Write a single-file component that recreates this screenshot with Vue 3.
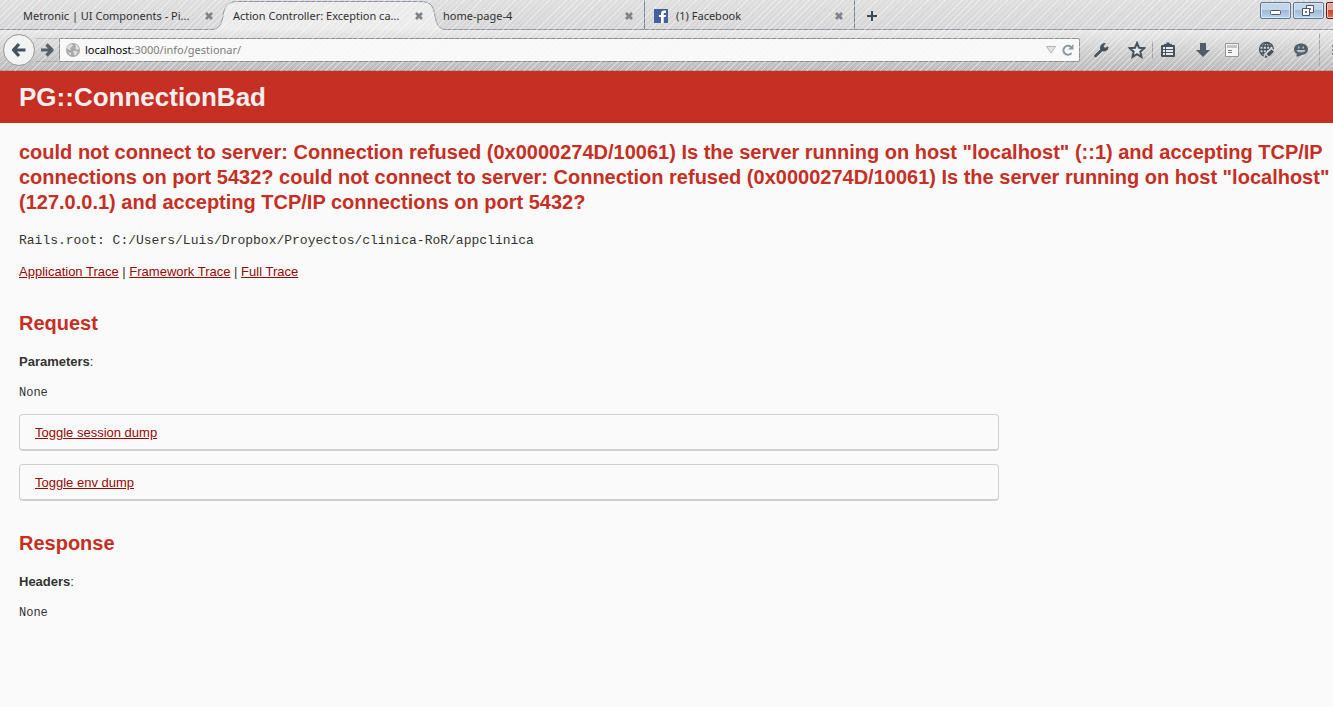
<script setup>
import { ref } from 'vue'

const tabs = [
  { title: 'Metronic | UI Components - Pi...', kind: 'first' },
  { title: 'Action Controller: Exception ca...', kind: 'active' },
  { title: 'home-page-4', kind: 'plain' },
  { title: '(1) Facebook', kind: 'icon' }
]
const url = ref('localhost:3000/info/gestionar/')
</script>

<template>
  <div class="browser">
    <header class="chrome">
      <div class="tabstrip">
        <div v-for="tab in tabs" :key="tab.title" class="tab" :class="tab.kind">
          <template v-if="tab.kind === 'active'">
            <svg class="cap cap-left" width="26" height="30" viewBox="0 0 26 30" aria-hidden="true">
              <path d="M0 30V29.500C7 29.500 9.500 24 11 16C12.500 6 15 1.500 26 1.500V30Z" fill="#ebebeb" />
              <path d="M0 29.500C7 29.500 9.500 24 11 16C12.500 6 15 1.500 26 1.500" fill="none" stroke="#8f969e" />
            </svg>
            <svg class="cap cap-right" width="26" height="30" viewBox="0 0 26 30" aria-hidden="true">
              <path d="M26 30V29.500C19 29.500 16.500 24 15 16C13.500 6 11 1.500 0 1.500V30Z" fill="#ebebeb" />
              <path d="M26 29.500C19 29.500 16.500 24 15 16C13.500 6 11 1.500 0 1.500" fill="none" stroke="#8f969e" />
            </svg>
          </template>
          <svg v-if="tab.kind === 'icon'" class="favicon" width="14" height="14" viewBox="0 0 14 14" aria-hidden="true">
            <path d="M0 0H14V14H0Z" fill="#4560a0" />
            <path d="M7 14V8H5V6H7V4.500C7 2.500 8.200 1.500 10 1.500H12V4H10.500C9.900 4 9.700 4.300 9.700 4.800V6H12L11.700 8H9.700V14Z" fill="#fff" />
          </svg>
          <span class="tab-title">{{ tab.title }}</span>
          <button class="close" :aria-label="'Close ' + tab.title">
            <svg width="8" height="8" viewBox="0 0 8 8"><path d="M1 1L7 7M7 1L1 7" stroke="#7c838a" stroke-width="2.600" /></svg>
          </button>
        </div>
        <button class="new-tab" aria-label="New tab">
          <svg width="10" height="10" viewBox="0 0 10 10"><path d="M5 0V10M0 5H10" stroke="#3c4854" stroke-width="2" /></svg>
        </button>
        <div class="window-buttons">
          <button class="win" aria-label="Minimize">
            <svg width="31" height="17" viewBox="0 0 31 17"><rect x="10.500" y="8.500" width="10" height="4" rx="1" fill="#fff" stroke="#505763" /></svg>
          </button>
          <button class="win" aria-label="Restore">
            <svg width="31" height="17" viewBox="0 0 31 17"><g fill="#f8fafc" stroke="#505763"><path d="M13.500 3.500H20.500V10.500H13.500Z" /><path d="M16.500 6.500H17.500V7.500H16.500Z" fill="#7794b4" /><path d="M9.500 6.500H16.500V13.500H9.500Z" /><path d="M12.500 9.500H13.500V10.500H12.500Z" fill="#7794b4" /></g></svg>
          </button>
          <button class="win win-close" aria-label="Close window"></button>
        </div>
      </div>

      <div class="toolbar">
        <button class="back" aria-label="Back">
          <svg width="16" height="16" viewBox="0 0 16 16"><path d="M8 2L2.500 8L8 14M3 8H14.500" fill="none" stroke="#44515e" stroke-width="3.200" stroke-linejoin="round" /></svg>
        </button>
        <button class="forward" aria-label="Forward">
          <svg width="14" height="14" viewBox="0 0 14 14"><path d="M6.500 1.500L12 7L6.500 12.500M11 7H1" fill="none" stroke="#56616c" stroke-width="3.200" stroke-linejoin="round" /></svg>
        </button>
        <div class="location">
          <svg width="14" height="14" viewBox="0 0 14 14" aria-hidden="true">
            <circle cx="7" cy="7" r="7" fill="#a9a9a9" />
            <path d="M1 5L2 3L5 1L7 2L6 4L4 5L5 7L3 7ZM9 1L12 3L13 6L11 7L9 5L10 4ZM7 8L10 8L12 9L9 13L8 11ZM2 9L5 10L5 12L4 12Z" fill="#e0e0e0" />
          </svg>
          <label class="address">
            <span class="shown" aria-hidden="true"><b>localhost</b>:3000/info/gestionar/</span>
            <input v-model="url" type="text" aria-label="Address" />
          </label>
          <button class="mini" aria-label="History">
            <svg width="10" height="8" viewBox="0 0 10 8"><path d="M0.500 0.500H9.500L5 7Z" fill="#dfe3ea" stroke="#adb3bf" /></svg>
          </button>
          <button class="mini reload" aria-label="Reload">
            <svg width="12" height="12" viewBox="0 0 12 12"><path d="M9.500 9A4.500 4.500 0 1 1 9 3" fill="none" stroke="#8c98a6" stroke-width="2" /><path d="M11.500 0V5.500H6Z" fill="#8c98a6" /></svg>
          </button>
        </div>
        <nav class="tools" aria-label="Toolbar">
          <button class="tool" aria-label="Developer tools">
            <svg width="16" height="16" viewBox="0 0 16 16"><path d="M1.200 13.200L7.200 7.400C6.700 4.500 7.800 1.500 12 1L12.800 1.400L10.500 4L12 6L15 4.200L15.400 5C15.400 8.400 12.400 9.800 9.300 9.300L3.400 15C2 15.600 0.700 14.600 1.200 13.200Z" fill="#46535f" /></svg>
          </button>
          <button class="tool star" aria-label="Bookmark this page">
            <svg width="18" height="18" viewBox="0 0 18 18"><path d="M9 2L11 6.800L16.300 7.200L12.300 10.700L13.500 15.900L9 13.100L4.500 15.900L5.700 10.700L1.700 7.200L7 6.800Z" fill="#e8e8e8" stroke="#46535f" stroke-width="2" /></svg>
          </button>
          <button class="tool clip" aria-label="Bookmarks">
            <svg width="16" height="16" viewBox="0 0 16 16"><path d="M1 4Q1 3 2 3H4V2H6.500V0.500H9.500V2H12V3H14Q15 3 15 4V14Q15 15 14 15H2Q1 15 1 14Z" fill="#46535f" /><path d="M3 5H5V7H3ZM6 5H13V7H6ZM3 8H5V10H3ZM6 8H13V10H6ZM3 11H5V13H3ZM6 11H13V13H6Z" fill="#e8e8e8" /></svg>
          </button>
          <button class="tool" aria-label="Downloads">
            <svg width="16" height="16" viewBox="0 0 16 16"><path d="M5 1H11V8H15L8 15L1 8H5Z" fill="#4f5d6a" /></svg>
          </button>
          <button class="tool page" aria-label="Panel">
            <svg width="14" height="14" viewBox="0 0 14 14"><path d="M0.500 0.500H13.500V13.500H0.500Z" fill="#f6f6f6" stroke="#969696" /><path d="M2 2H12V5H2Z" fill="#c4c4c4" /><path d="M3 7.500H7M3 9.500H7" stroke="#777" /></svg>
          </button>
          <button class="tool globe" aria-label="Web tools">
            <svg width="18" height="18" viewBox="0 0 18 18"><g fill="none" stroke="#46535f" stroke-width="1.300"><circle cx="8.500" cy="8.500" r="7" /><ellipse cx="8.500" cy="8.500" rx="3.500" ry="7" /><path d="M8.500 1V16M1.500 8.500H16M2.500 5H14.500M2.500 12H14.500" /></g><path d="M5 17.500L6.500 12.500L13 6.500L17.500 10L11 17Z" fill="#d8d8d8" /><path d="M6.500 17L7.500 14L10 16.200ZM8.500 13L13.500 8.500L16 10.800L11 15.400Z" fill="#46535f" /></svg>
          </button>
          <button class="tool chat" aria-label="Chat">
            <svg width="16" height="16" viewBox="0 0 16 16"><path d="M8 1.500C12.200 1.500 15 3.900 15 7.200C15 10.500 12.200 12.700 8.500 12.900C7 14 5 14.700 2.500 14.300C3.700 13.600 4 12.600 3.800 11.700C2 10.700 1 9.200 1 7.200C1 3.900 3.800 1.500 8 1.500Z" fill="#52606d" /><path d="M5 4.500H6.500V6.500H5ZM9.500 4.500H11V6.500H9.500ZM3.500 8H12.500C12 9.800 10.300 10.500 8 10.500S4 9.800 3.500 8Z" fill="#b9bfc5" /></svg>
          </button>
          <button class="menu" aria-label="Menu">
            <svg width="12" height="12" viewBox="0 0 12 12"><path d="M0 2H12M0 6H12M0 10H12" stroke="#7c858e" stroke-width="2" /></svg>
          </button>
        </nav>
      </div>
    </header>

    <main>
      <header class="banner"><h1>PG::ConnectionBad</h1></header>
      <div class="container">
        <h2 class="message">could not connect to server: Connection refused (0x0000274D/10061) Is the server running on host "localhost" (::1) and accepting TCP/IP connections on port 5432? could not connect to server: Connection refused (0x0000274D/10061) Is the server running on host "localhost" (127.0.0.1) and accepting TCP/IP connections on port 5432?</h2>
        <p><code>Rails.root: C:/Users/Luis/Dropbox/Proyectos/clinica-RoR/appclinica</code></p>
        <p><a href="#">Application Trace</a> | <a href="#">Framework Trace</a> | <a href="#">Full Trace</a></p>
        <h2>Request</h2>
        <p><b>Parameters</b>:</p>
        <pre>None</pre>
        <div class="details"><a href="#">Toggle session dump</a></div>
        <div class="details"><a href="#">Toggle env dump</a></div>
        <h2>Response</h2>
        <p><b>Headers</b>:</p>
        <pre>None</pre>
      </div>
    </main>
  </div>
</template>

<style>
html { background: #fafafa; }
</style>

<style scoped>
.browser { font: 13px/18px "Liberation Sans", Arial, sans-serif; color: #333; overflow: hidden; }
button { border: 0; padding: 0; margin: 0; background: none; display: flex; align-items: center; justify-content: center; flex: none; }
svg { display: block; flex: none; position: relative; z-index: 2; }

.chrome { position: relative; font: 11px/18px "Noto Sans", "Open Sans", sans-serif; }
.chrome::after { content: ""; position: absolute; inset: 0; pointer-events: none; background: repeating-linear-gradient(135deg, rgba(255, 255, 255, 0.38) 0 1px, transparent 1px 4px); }

.tabstrip { display: flex; height: 30px; box-sizing: border-box; border-bottom: 1px solid #9097a0; background: linear-gradient(#dedede, #d6d6d6); }
.tab { position: relative; display: flex; align-items: center; width: 210px; height: 29px; box-sizing: border-box; padding: 2px 10px 0 9px; border-right: 1px solid #7b838c; color: #303030; }
.tab.first { width: 223px; padding-left: 23px; padding-right: 9px; border: 0; }
.tab.active { width: 212px; height: 30px; padding: 2px 11px 1px 10px; border: 0; background: linear-gradient(#8f969e, #8f969e) 15px 1px / 182px 1px no-repeat, linear-gradient(#ebebeb, #ebebeb) 15px 2px / 182px 28px no-repeat; }
.tab.plain { padding-left: 8px; }
.tab-title { position: relative; z-index: 2; flex: 1; min-width: 0; white-space: nowrap; }
.close { width: 10px; height: 12px; }
.favicon { margin-right: 8px; }
.cap { position: absolute; top: 0; z-index: auto; }
.cap-left { left: -11px; }
.cap-right { right: -11px; }
.new-tab { width: 34px; padding-top: 2px; }
.window-buttons { position: relative; z-index: 2; display: flex; gap: 2px; height: 17px; margin: 2px -24px 0 auto; }
.win { width: 31px; height: 17px; box-sizing: border-box; border: 1px solid #5f7796; border-radius: 2px; background: linear-gradient(#c3d5e8 0 48%, #9fb9d5 48%, #bcd4ea); box-shadow: inset 0 0 0 1px #d8e5f2; }
.win-close { border-color: #5a1b1c; background: linear-gradient(#e3a598 0 48%, #c2452d 48%, #d5755a); box-shadow: inset 0 0 0 1px #efc0b5; }

.toolbar { display: flex; align-items: center; height: 41px; box-sizing: border-box; padding: 0 0 1px 3px; border-bottom: 1px solid #a8a0a0; background: linear-gradient(#e8e8e8, #bababa); }
.back { position: relative; z-index: 1; width: 32px; height: 32px; box-sizing: border-box; border: 1px solid #92979c; border-radius: 50%; background: #f3f3f3; }
.forward { width: 24px; height: 24px; border-top: 1px solid #b8b8b8; border-bottom: 1px solid #aaa; box-sizing: border-box; }
.location { flex: 1; display: flex; align-items: center; height: 24px; box-sizing: border-box; padding: 0 5px 0 6px; border: 1px solid #8f8f8f; border-radius: 0 2px 2px 0; background: #f8f8f8; }
.address { position: relative; z-index: 2; flex: 1; margin-left: 5px; height: 18px; }
.shown { color: #7c7c7c; pointer-events: none; }
.shown b { color: #000; font-weight: 400; }
.address input { position: absolute; inset: 0; width: 100%; box-sizing: border-box; padding: 0; border: 0; outline: 0; background: transparent; color: transparent; font: inherit; }
.mini { width: 12px; height: 18px; }
.reload { margin-left: 5px; }
.tools { display: flex; align-items: center; height: 38px; padding-left: 13px; }
.tool { width: 16px; height: 18px; }
.star { width: 18px; margin-left: 19px; }
.clip { width: 24px; padding-left: 6px; margin-left: 6px; box-sizing: border-box; border-left: 1px solid #9da3aa; }
.clip + .tool { margin-left: 19px; }
.page { width: 14px; margin-left: 14px; }
.globe { width: 18px; margin-left: 19px; }
.chat { margin-left: 17px; }
.menu { width: 14px; height: 34px; margin-left: 10px; padding-left: 12px; justify-content: flex-start; box-sizing: border-box; overflow: hidden; border-left: 1px solid #a4a8ac; }

.banner { padding: 14px 19px 13px; background: #c52f24; color: #f8eeee; }
h1 { margin: 0; font-size: 26px; line-height: 25px; font-weight: 700; }
.container { padding-left: 19px; }
h2 { margin: 30px 0 17px; font-size: 20px; line-height: 25px; color: #c52f24; }
.message { margin: 17px 0 16px; }
p { margin: 0 0 13px; }
code { font: 13px/18px "Liberation Mono", "Courier New", monospace; }
pre { margin: 0 0 12px; font: 12px/18px "Liberation Mono", "Courier New", monospace; }
a { color: #980905; }
.details { max-width: 980px; box-sizing: border-box; margin-bottom: 13px; padding: 9px 15px 7px; border: 1px solid #d0d0d0; border-bottom-width: 2px; border-radius: 4px; }
</style>
